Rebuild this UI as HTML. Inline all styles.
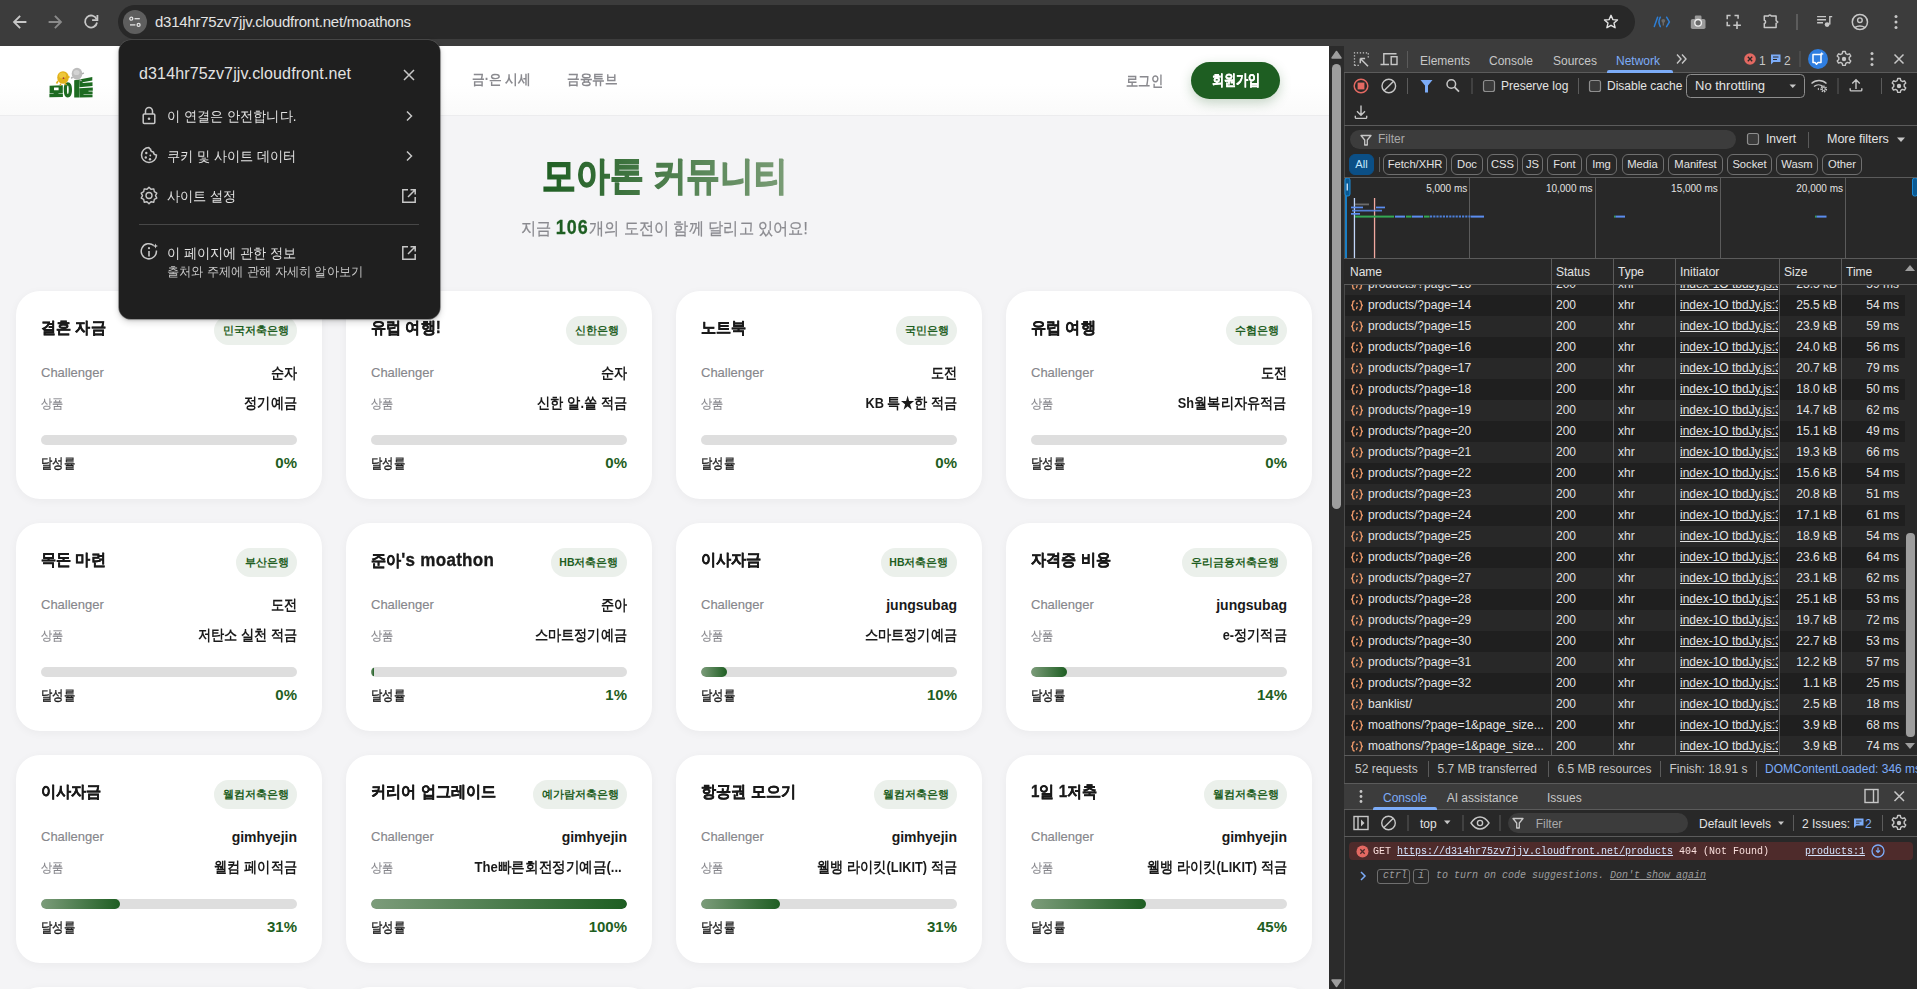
<!DOCTYPE html>
<html><head><meta charset="utf-8">
<style>
*{box-sizing:border-box;margin:0;padding:0}
html,body{width:1917px;height:989px;overflow:hidden;background:#282828;font-family:"Liberation Sans",sans-serif}
.abs{position:absolute}
#chrome{position:absolute;left:0;top:0;width:1917px;height:46px;background:#3c3c3c}
#omni{position:absolute;left:118px;top:5px;width:1517px;height:34px;border-radius:17px;background:#282828}
#page{position:absolute;left:0;top:46px;width:1329px;height:943px;background:#f4f4f6;overflow:hidden}
#hdr{position:absolute;left:0;top:0;width:1329px;height:70px;background:linear-gradient(#fff 55%,#fafafa);border-bottom:1px solid #ececee}
.card{position:absolute;width:305.5px;height:208px;background:#fff;border-radius:24px;box-shadow:0 2px 10px rgba(0,0,0,.045)}
#sb{position:absolute;left:1329px;top:46px;width:15px;height:943px;background:#2b2b2b}
#dt{position:absolute;left:1344px;top:46px;width:573px;height:943px;background:#282828;box-shadow:inset 1px 0 0 #4a4a4a;color:#e3e3e3;font-size:12px}
#popup{position:absolute;left:119px;top:40px;width:321px;height:279px;background:#1f1f1f;border-radius:12px;box-shadow:0 0 0 .6px rgba(90,90,90,.9),0 1px 3px rgba(0,0,0,.25),0 3px 6px 1px rgba(0,0,0,.12);color:#e3e3e3}

.card .ct{position:absolute;left:24.75px;top:24px;font-size:16px;font-weight:700;color:#1a1a1a;line-height:26px;white-space:nowrap;transform:scaleX(.945);transform-origin:0 50%;-webkit-text-stroke:.35px #1a1a1a}
.card .bd{position:absolute;right:24.75px;top:25px;height:29px;padding:0 8.5px;border-radius:15px;background:#ebf0eb;white-space:nowrap}
.card .bd span{display:inline-block;color:#1e5e22;font-size:10.5px;font-weight:700;line-height:29px}
.card .lb{position:absolute;left:24.75px;font-size:13px;color:#86868b;line-height:20px;white-space:nowrap;-webkit-text-stroke:.15px #86868b}
.card .vl{position:absolute;right:24.75px;font-size:14.5px;font-weight:700;color:#1a1a1a;line-height:20px;white-space:nowrap;transform:scaleX(.88);transform-origin:100% 50%}
.card .l1{top:72px}.card .l2{top:102px}.card .la{transform:none;font-size:14px}.card .ko{top:103px;transform:scaleX(.86);transform-origin:0 50%}
.card .bar{position:absolute;left:24.75px;top:143.5px;width:256px;height:10px;border-radius:5px;background:#dedede;overflow:hidden}
.card .fill{height:100%;border-radius:5px;background:linear-gradient(90deg,#7c9c7a,#1e5e22)}
.card .dl{position:absolute;left:24.75px;top:162px;font-size:14px;font-weight:400;-webkit-text-stroke:.35px #1a1a1a;color:#1a1a1a;line-height:20px;transform:scaleX(.81);transform-origin:0 50%}
.card .pc{position:absolute;right:24.75px;top:162px;font-size:15px;font-weight:700;color:#1e5e22;line-height:20px}
#logo{position:absolute;left:44px;top:16px}
.nav{position:absolute;top:22px;font-size:15px;font-weight:600;color:#8a8a8f;line-height:24px;white-space:nowrap;transform-origin:0 50%}
#signup{position:absolute;left:1191px;top:16px;width:89px;height:37px;border-radius:19px;background:#1e5e22;color:#fff;font-size:15px;font-weight:700;text-align:center;line-height:35px;box-shadow:0 4px 12px rgba(30,94,34,.25)}
#title{position:absolute;left:0;width:1329px;top:105px;text-align:center;font-size:39px;font-weight:800;line-height:50px}
#title span{display:inline-block;transform:scaleX(0.865);background:linear-gradient(90deg,#1e5e22,#7b9d77);-webkit-background-clip:text;background-clip:text;color:transparent;-webkit-text-stroke:1.3px transparent;padding:0 2px}
#sub{position:absolute;left:0;width:1329px;top:168px;text-align:center;font-size:17px;color:#8a8a8f;line-height:26px;transform:scaleX(0.895);-webkit-text-stroke:.25px #8a8a8f}
#sub b{color:#1e5e22;font-size:20px;font-weight:800;letter-spacing:1.2px;-webkit-text-stroke:.3px #1e5e22}
.pi{position:absolute;left:48px;font-size:14px;line-height:20px;color:#e3e3e3;white-space:nowrap;transform:scaleX(.94);transform-origin:0 50%}

.dtt{position:absolute;font-size:12px;line-height:26px;white-space:nowrap}
.chip{position:absolute;top:108px;height:20.5px;border:1px solid #6f6f6f;border-radius:6px;font-size:11.2px;line-height:18.5px;text-align:center;color:#e3e3e3;white-space:nowrap}
.ovl{position:absolute;width:78px;text-align:right;font-size:10px;line-height:12px;color:#e3e3e3}
.row{position:absolute;left:0;width:560px;height:21px;font-size:12px;line-height:21px;color:#e3e3e3;white-space:nowrap}
.row span{position:absolute;top:0}
.row .ic{position:absolute;left:5px;top:5px}
.row .nm{left:23px}
.row .st{left:211px}.row .ty{left:273px}
.row .in{left:335px;width:98px;overflow:hidden;text-decoration:underline}
.row .sz{left:436px;width:56px;text-align:right}
.row .tm{left:498px;width:56px;text-align:right}
.mono{position:absolute;font-family:"Liberation Mono",monospace;font-size:10px;white-space:nowrap}
</style></head><body><svg width="0" height="0" style="position:absolute"><defs><g id="brc" fill="none" stroke="#f29c6b" stroke-width="1.3" stroke-linecap="round"><path d="M4.3 .8C3 .8 2.8 1.6 2.8 3.2C2.8 4.6 2.4 5.2 1.2 5.3C2.4 5.4 2.8 6 2.8 7.4C2.8 9 3 9.9 4.3 9.9"/><path d="M9.7 .8C11 .8 11.2 1.6 11.2 3.2C11.2 4.6 11.6 5.2 12.8 5.3C11.6 5.4 11.2 6 11.2 7.4C11.2 9 11 9.9 9.7 9.9"/><path d="M7.1 6.6L6.5 8.6"/><circle cx="7" cy="3.3" r=".9" fill="#f29c6b" stroke="none"/></g></defs></svg>
<div id="chrome">
  <svg class="abs" style="left:0;top:0" width="118" height="46" viewBox="0 0 118 46">
    <g fill="none" stroke="#c7c7c7" stroke-width="1.8" stroke-linecap="square">
      <path d="M25.5 22H14.5M19.5 16.5L14 22L19.5 27.5"/>
    </g>
    <g fill="none" stroke="#8a8a8a" stroke-width="1.8" stroke-linecap="square">
      <path d="M49.5 22H60.5M55.5 16.5L61 22L55.5 27.5"/>
    </g>
    <g fill="none" stroke="#c7c7c7" stroke-width="1.8">
      <path d="M96.6 19.2A6 6 0 1 0 97 22.5"/>
      <path d="M97.4 15.8V20.2H93" stroke-linecap="square"/>
    </g>
  </svg>
  <div id="omni">
    <div class="abs" style="left:5px;top:5px;width:24px;height:24px;border-radius:12px;background:#5e5e5e"></div>
    <svg class="abs" style="left:5px;top:5px" width="24" height="24" viewBox="0 0 24 24"><g fill="none" stroke="#e3e3e3" stroke-width="1.3"><circle cx="8.3" cy="8.7" r="1.5"/><path d="M11.5 8.7H16.8"/><circle cx="15.6" cy="14.9" r="1.5"/><path d="M7 14.9H12.4"/></g></svg>
    <div class="abs" style="left:37px;top:0;line-height:34px;font-size:15px;color:#e3e3e3;letter-spacing:-0.24px">d314hr75zv7jjv.cloudfront.net/moathons</div>
    <svg class="abs" style="left:1485px;top:9px" width="16" height="16" viewBox="0 0 16 16"><path d="M8 1.3L9.9 5.6L14.5 6L11 9.1L12.1 13.7L8 11.3L3.9 13.7L5 9.1L1.5 6L6.1 5.6Z" fill="none" stroke="#e3e3e3" stroke-width="1.4" stroke-linejoin="round"/></svg>
  </div>
  <svg class="abs" style="left:1640px;top:0" width="277" height="46" viewBox="0 0 277 46">
    <g fill="none" stroke="#2e7fd6" stroke-width="1.5" stroke-linecap="round"><path d="M14.3 26.5L17.6 17.3"/><path d="M20.3 17.2Q17.6 21.9 20.3 26.6"/><path d="M26.6 17.2L29.4 21.9L26.6 26.6"/></g>
    <circle cx="23.3" cy="20.8" r="1.9" fill="#6a6a6a"/><path d="M23.3 22v3.6" stroke="#6a6a6a" stroke-width="1.4"/>
    <rect x="50.8" y="19" width="14.7" height="10" rx="1.8" fill="#9a9a9a"/><rect x="54.8" y="15.6" width="6.7" height="4.5" rx="1.2" fill="#9a9a9a"/>
    <circle cx="58.1" cy="22.8" r="3.3" fill="#6a6a6a" stroke="#ededed" stroke-width="1.4"/>
    <g fill="none" stroke="#c7c7c7" stroke-width="1.5"><path d="M87.2 19.2V15.6H90.6M94.5 15.6H98.1V18.7M87.2 21.8V25.4H90.2"/><path d="M97 21.6V28.9M93.3 25.2H100.9" stroke-width="1.6"/></g>
    <path d="M124.3 16.1H128.4a1.5 1.5 0 0 1 2.9 0H136.1V20.6l1.7 1.4l-1.7 1.4V27.6H124.3V23.6a1.7 1.7 0 0 0 0-3.3z" fill="none" stroke="#c7c7c7" stroke-width="1.5" stroke-linejoin="round"/>
    <rect x="156.3" y="14" width="1.4" height="16" fill="#6a6a6a"/>
    <g fill="none" stroke="#c7c7c7" stroke-width="1.4"><path d="M177.1 16.6H186M177.1 19.8H186M177.1 22.8H183"/><path d="M189.8 24.5V16.6H192.2"/></g><circle cx="187.1" cy="24.6" r="2.4" fill="#c7c7c7"/>
    <circle cx="219.9" cy="22" r="7.6" fill="none" stroke="#c7c7c7" stroke-width="1.5"/><circle cx="219.9" cy="20.2" r="2.3" fill="none" stroke="#c7c7c7" stroke-width="1.4"/><path d="M214.6 27.6q5.3-3.2 10.6 0" fill="none" stroke="#c7c7c7" stroke-width="1.5"/>
    <g fill="#c7c7c7"><circle cx="256" cy="16.5" r="1.5"/><circle cx="256" cy="22" r="1.5"/><circle cx="256" cy="27.5" r="1.5"/></g>
  </svg>
</div>
<div id="page">
  <div id="hdr">
    <svg id="logo" width="54" height="40" viewBox="0 0 54 40">
  <g fill="#1d6b21">
    <path d="M5.6 23.8L18.8 23.2V31H14.5V31.6H18.9V35L5.4 35.3V31.8H9.6V31.2H5.6ZM10 25.6V28.3H14.6V25.5Z" fill-rule="evenodd"/>
    <path d="M23.8 20.2C26.5 20.2 28 23 28 27.7C28 32.5 26.5 35.4 23.8 35.4C21 35.4 19.8 32.5 19.8 27.7C19.8 23 21 20.2 23.8 20.2ZM23.8 23.5C23.2 23.5 23 25 23 27.8C23 30.6 23.2 32.1 23.8 32.1C24.4 32.1 24.7 30.6 24.7 27.8C24.7 25 24.4 23.5 23.8 23.5Z" fill-rule="evenodd"/>
    <path d="M30.2 18.2L35.2 17.6V35.6L30.2 35.4Z"/>
    <path d="M35.2 17.4L48.3 15V18.6L38.6 20.3V21L48.5 20.2V24L35.4 25.2ZM35.2 26.3L48.8 25.5V28.8H44.5V29.6H48.6V31.9H39.5V32.5H48.5V35.3L35.4 35.6V32.4Z"/>
  </g>
  <ellipse cx="19" cy="15.5" rx="5.8" ry="6.3" fill="#e2b21c"/>
  <ellipse cx="18.5" cy="13.5" rx="3.5" ry="3" fill="#f3d24a" opacity=".7"/>
  <path d="M14 19l-1.5 2.5M24 15.5l1.5 -1" stroke="#e2b21c" stroke-width="1.6"/>
  <path d="M16 22l1 1.5M21 21.5l1.5 1.5" stroke="#d9a51a" stroke-width="1.4"/>
  <circle cx="19.5" cy="16.2" r="0.9" fill="#a33"/>
  <ellipse cx="33" cy="11.8" rx="5.3" ry="6" fill="#bdbdbd"/>
  <ellipse cx="32.5" cy="10.5" rx="3" ry="2.6" fill="#d8d8d8" opacity=".8"/>
  <path d="M38 12l1.8-1.2M28.5 15l-1.2 1.5M36 17.5l1.5 1.5" stroke="#aaa" stroke-width="1.5"/>
</svg>
    <div class="nav" style="left:472px;font-size:14px;top:20.5px;transform:scaleX(.91)">금·은 시세</div>
    <div class="nav" style="left:567px;font-size:14px;top:20.5px;transform:scaleX(.9)">금융튜브</div>
    <div class="nav" style="left:1126px;top:23px;font-weight:700;transform:scaleX(.82)">로그인</div>
    <div id="signup"><span style="display:inline-block;transform:scaleX(.81);-webkit-text-stroke:.3px #fff">회원가입</span></div>
  </div>
  <div id="title"><span>모아톤 커뮤니티</span></div>
  <div id="sub">지금 <b>106</b>개의 도전이 함께 달리고 있어요!</div>
<div class="card" style="left:16.25px;top:245.2px">
<div class="ct">결혼 자금</div><div class="bd"><span>민국저축은행</span></div>
<div class="lb l1">Challenger</div><div class="vl l1">순자</div>
<div class="lb l2 ko">상품</div><div class="vl l2">정기예금</div>
<div class="bar"></div>
<div class="dl">달성률</div><div class="pc">0%</div>
</div>
<div class="card" style="left:346.25px;top:245.2px">
<div class="ct">유럽 여행!</div><div class="bd"><span>신한은행</span></div>
<div class="lb l1">Challenger</div><div class="vl l1">순자</div>
<div class="lb l2 ko">상품</div><div class="vl l2">신한 알.쏠 적금</div>
<div class="bar"></div>
<div class="dl">달성률</div><div class="pc">0%</div>
</div>
<div class="card" style="left:676.25px;top:245.2px">
<div class="ct">노트북</div><div class="bd"><span>국민은행</span></div>
<div class="lb l1">Challenger</div><div class="vl l1">도전</div>
<div class="lb l2 ko">상품</div><div class="vl l2">KB 특★한 적금</div>
<div class="bar"></div>
<div class="dl">달성률</div><div class="pc">0%</div>
</div>
<div class="card" style="left:1006.25px;top:245.2px">
<div class="ct">유럽 여행</div><div class="bd"><span>수협은행</span></div>
<div class="lb l1">Challenger</div><div class="vl l1">도전</div>
<div class="lb l2 ko">상품</div><div class="vl l2">Sh월복리자유적금</div>
<div class="bar"></div>
<div class="dl">달성률</div><div class="pc">0%</div>
</div>
<div class="card" style="left:16.25px;top:477.2px">
<div class="ct">목돈 마련</div><div class="bd"><span>부산은행</span></div>
<div class="lb l1">Challenger</div><div class="vl l1">도전</div>
<div class="lb l2 ko">상품</div><div class="vl l2">저탄소 실천 적금</div>
<div class="bar"></div>
<div class="dl">달성률</div><div class="pc">0%</div>
</div>
<div class="card" style="left:346.25px;top:477.2px">
<div class="ct">준아<span style="font-size:18px;letter-spacing:.3px">'s moathon</span></div><div class="bd"><span>HB저축은행</span></div>
<div class="lb l1">Challenger</div><div class="vl l1">준아</div>
<div class="lb l2 ko">상품</div><div class="vl l2">스마트정기예금</div>
<div class="bar"><div class="fill" style="width:1%"></div></div>
<div class="dl">달성률</div><div class="pc">1%</div>
</div>
<div class="card" style="left:676.25px;top:477.2px">
<div class="ct">이사자금</div><div class="bd"><span>HB저축은행</span></div>
<div class="lb l1">Challenger</div><div class="vl l1 la">jungsubag</div>
<div class="lb l2 ko">상품</div><div class="vl l2">스마트정기예금</div>
<div class="bar"><div class="fill" style="width:10%"></div></div>
<div class="dl">달성률</div><div class="pc">10%</div>
</div>
<div class="card" style="left:1006.25px;top:477.2px">
<div class="ct">자격증 비용</div><div class="bd"><span>우리금융저축은행</span></div>
<div class="lb l1">Challenger</div><div class="vl l1 la">jungsubag</div>
<div class="lb l2 ko">상품</div><div class="vl l2">e-정기적금</div>
<div class="bar"><div class="fill" style="width:14%"></div></div>
<div class="dl">달성률</div><div class="pc">14%</div>
</div>
<div class="card" style="left:16.25px;top:709.2px">
<div class="ct">이사자금</div><div class="bd"><span>웰컴저축은행</span></div>
<div class="lb l1">Challenger</div><div class="vl l1 la">gimhyejin</div>
<div class="lb l2 ko">상품</div><div class="vl l2">웰컴 페이적금</div>
<div class="bar"><div class="fill" style="width:31%"></div></div>
<div class="dl">달성률</div><div class="pc">31%</div>
</div>
<div class="card" style="left:346.25px;top:709.2px">
<div class="ct">커리어 업그레이드</div><div class="bd"><span>예가람저축은행</span></div>
<div class="lb l1">Challenger</div><div class="vl l1 la">gimhyejin</div>
<div class="lb l2 ko">상품</div><div class="vl l2" style="right:30.5px;transform:scaleX(.905)">The빠른회전정기예금(...</div>
<div class="bar"><div class="fill" style="width:100%"></div></div>
<div class="dl">달성률</div><div class="pc">100%</div>
</div>
<div class="card" style="left:676.25px;top:709.2px">
<div class="ct">항공권 모으기</div><div class="bd"><span>웰컴저축은행</span></div>
<div class="lb l1">Challenger</div><div class="vl l1 la">gimhyejin</div>
<div class="lb l2 ko">상품</div><div class="vl l2">웰뱅 라이킷(LIKIT) 적금</div>
<div class="bar"><div class="fill" style="width:31%"></div></div>
<div class="dl">달성률</div><div class="pc">31%</div>
</div>
<div class="card" style="left:1006.25px;top:709.2px">
<div class="ct">1일 1저축</div><div class="bd"><span>웰컴저축은행</span></div>
<div class="lb l1">Challenger</div><div class="vl l1 la">gimhyejin</div>
<div class="lb l2 ko">상품</div><div class="vl l2">웰뱅 라이킷(LIKIT) 적금</div>
<div class="bar"><div class="fill" style="width:45%"></div></div>
<div class="dl">달성률</div><div class="pc">45%</div>
</div>
<div class="card" style="left:16.25px;top:941.2px"></div>
<div class="card" style="left:346.25px;top:941.2px"></div>
<div class="card" style="left:676.25px;top:941.2px"></div>
<div class="card" style="left:1006.25px;top:941.2px"></div>
</div>
<div id="sb">
  <svg class="abs" style="left:0;top:0" width="15" height="943"><path d="M3 12h9L7.5 5.5z" fill="#9e9e9e" stroke="#9e9e9e" stroke-width="1.5" stroke-linejoin="round"/><path d="M3 934h9L7.5 940.5z" fill="#9e9e9e" stroke="#9e9e9e" stroke-width="1.5" stroke-linejoin="round"/></svg>
  <div class="abs" style="left:3px;top:18px;width:9px;height:445px;border-radius:4.5px;background:#9e9e9e"></div>
</div>
<div id="dt"><div class="abs" style="left:0;top:0;width:573px;height:27px;background:#3c3c3c;border-bottom:1px solid #5b5b5b"></div>
<div class="abs" style="left:0;top:79px;width:573px;height:1px;background:#5b5b5b"></div>
<svg class="abs" style="left:0;top:0" width="573" height="27" viewBox="0 0 573 27">
 <g fill="none" stroke="#c7c7c7" stroke-width="1.3" stroke-dasharray="1.3 1.7"><path d="M10.5 19.5V6.8H24.3V12"/><path d="M10.5 19.3H15"/></g>
 <g fill="none" stroke="#c7c7c7" stroke-width="1.5"><path d="M16.3 12.5L24 20.2M16.3 12.5V17.3M16.3 12.5H21.1"/></g>
 <g fill="none" stroke="#c7c7c7" stroke-width="1.4"><path d="M39.8 18V7.7H52.5M36.5 18.5H45"/><rect x="47.2" y="10.7" width="5.8" height="7.8"/></g>
 <rect x="63" y="5" width="1" height="17" fill="#5b5b5b"/>
 <g fill="none" stroke="#c7c7c7" stroke-width="1.4"><path d="M333 8.5L337 13L333 17.5M338 8.5L342 13L338 17.5"/></g>
 <circle cx="406" cy="13" r="5.8" fill="#e46962"/><path d="M403.8 10.8l4.4 4.4M408.2 10.8l-4.4 4.4" stroke="#282828" stroke-width="1.3"/>
 <path d="M427 8.5h9.5v7.5h-7l-2.5 2.5z" fill="#7cacf8"/><path d="M429 11h5.5M429 13.5h4" stroke="#282828" stroke-width="1"/>
 <rect x="455.5" y="5" width="1" height="16" fill="#5b5b5b"/>
 <circle cx="474" cy="13" r="10" fill="#2f7ee0"/>
 <path d="M469 8.5h8v8h-3l-1.5 1.8l-1.5-1.8h-2z" fill="none" stroke="#fff" stroke-width="1.5" stroke-linejoin="round"/><path d="M477.8 5.8l.6 1.5l1.5.6l-1.5.6l-.6 1.5l-.6-1.5l-1.5-.6l1.5-.6z" fill="#fff"/>
 <g transform="translate(500 13)"><path d="M-1.3-7.5h2.6l.5 2.1l1.6.9l2.1-.7l1.3 2.2l-1.6 1.5v1.9l1.6 1.5l-1.3 2.2l-2.1-.7l-1.6.9l-.5 2.1h-2.6l-.5-2.1l-1.6-.9l-2.1.7l-1.3-2.2l1.6-1.5v-1.9l-1.6-1.5l1.3-2.2l2.1.7l1.6-.9z" fill="none" stroke="#c7c7c7" stroke-width="1.4" stroke-linejoin="round"/><circle r="2.2" fill="#c7c7c7"/></g>
 <g fill="#c7c7c7"><circle cx="528" cy="7.5" r="1.5"/><circle cx="528" cy="13" r="1.5"/><circle cx="528" cy="18.5" r="1.5"/></g>
 <path d="M550.5 8.5l9 9M559.5 8.5L550.5 17.5" stroke="#c7c7c7" stroke-width="1.5"/>
</svg>
<div class="dtt" style="left:76px;top:1.5px;color:#c7c7c7">Elements</div>
<div class="dtt" style="left:145px;top:1.5px;color:#c7c7c7">Console</div>
<div class="dtt" style="left:209px;top:1.5px;color:#c7c7c7">Sources</div>
<div class="dtt" style="left:272px;top:1.5px;color:#7cacf8">Network</div>
<div class="abs" style="left:263px;top:23.5px;width:66px;height:3px;border-radius:2px 2px 0 0;background:#7cacf8"></div>
<div class="dtt" style="left:415px;top:1.5px;color:#c7c7c7">1</div><div class="dtt" style="left:440px;top:1.5px;color:#c7c7c7">2</div>
<svg class="abs" style="left:0;top:27px" width="573" height="52" viewBox="0 0 573 52">
 <circle cx="17" cy="13" r="6.8" fill="none" stroke="#e46962" stroke-width="1.5"/><rect x="13.6" y="9.6" width="6.8" height="6.8" fill="#e46962"/>
 <circle cx="44.8" cy="13" r="6.8" fill="none" stroke="#c7c7c7" stroke-width="1.4"/><path d="M40 17.8L49.6 8.2" stroke="#c7c7c7" stroke-width="1.4"/>
 <rect x="63" y="5" width="1" height="16" fill="#5b5b5b"/>
 <path d="M76.5 7h12l-4.5 5.5v7h-3v-7z" fill="#7cacf8"/>
 <circle cx="107.3" cy="11" r="4.3" fill="none" stroke="#c7c7c7" stroke-width="1.5"/><path d="M110.5 14.2L115 18.7" stroke="#c7c7c7" stroke-width="1.7"/>
 <rect x="127.5" y="5" width="1" height="16" fill="#5b5b5b"/>
 <rect x="139.5" y="7.5" width="11" height="11" rx="2" fill="#3a3a3a" stroke="#8e8e8e" stroke-width="1.2"/>
 <rect x="234" y="5" width="1" height="16" fill="#5b5b5b"/>
 <rect x="245.5" y="7.5" width="11" height="11" rx="2" fill="#3a3a3a" stroke="#8e8e8e" stroke-width="1.2"/>
 <rect x="342.5" y="1.5" width="118" height="23" rx="4" fill="none" stroke="#8e8e8e" stroke-width="1"/>
 <path d="M445.5 11.5h6.5l-3.25 3.5z" fill="#c7c7c7"/>
 <g fill="none" stroke="#c7c7c7" stroke-width="1.4"><path d="M467.5 10.5a11 11 0 0 1 15 0M470 13.5a7 7 0 0 1 9 0"/></g><g transform="translate(479.7 16)"><circle r="2.6" fill="none" stroke="#c7c7c7" stroke-width="1.6" stroke-dasharray="1.4 .9"/><circle r="1.6" fill="none" stroke="#c7c7c7" stroke-width="1"/></g><path d="M475 14.8l-1.6 1.2l1.6 1.2z" fill="#c7c7c7"/>
 <rect x="493.5" y="5" width="1" height="16" fill="#5b5b5b"/>
 <path d="M512 16V6.8M508.2 10.6L512 6.8l3.8 3.8M506.2 15.3v1.6a1 1 0 0 0 1 1h9.6a1 1 0 0 0 1-1v-1.6" fill="none" stroke="#c7c7c7" stroke-width="1.4"/>
 <rect x="537" y="5" width="1" height="16" fill="#5b5b5b"/>
 <g transform="translate(555 13)"><path d="M-1.3-7.5h2.6l.5 2.1l1.6.9l2.1-.7l1.3 2.2l-1.6 1.5v1.9l1.6 1.5l-1.3 2.2l-2.1-.7l-1.6.9l-.5 2.1h-2.6l-.5-2.1l-1.6-.9l-2.1.7l-1.3-2.2l1.6-1.5v-1.9l-1.6-1.5l1.3-2.2l2.1.7l1.6-.9z" fill="none" stroke="#c7c7c7" stroke-width="1.4" stroke-linejoin="round"/><circle r="2.2" fill="#c7c7c7"/></g>
 <path d="M17 32.5V42M13 38.3L17 42.3l4-4M11.3 42.8v1.6a1 1 0 0 0 1 1h9.4a1 1 0 0 0 1-1v-1.6" fill="none" stroke="#c7c7c7" stroke-width="1.4"/>
</svg>
<div class="dtt" style="left:157px;top:27px;line-height:26px;color:#e3e3e3">Preserve log</div>
<div class="dtt" style="left:263px;top:27px;line-height:26px;color:#e3e3e3">Disable cache</div>
<div class="dtt" style="left:351px;top:27px;line-height:26px;color:#e3e3e3;font-size:13px">No throttling</div>
<div class="abs" style="left:6px;top:83.5px;width:386px;height:19.5px;border-radius:10px;background:#3c3c3c"></div>
<svg class="abs" style="left:14px;top:86px" width="16" height="16" viewBox="0 0 16 16"><path d="M3 3.5h10L9.3 8v5H6.7V8z" fill="none" stroke="#c7c7c7" stroke-width="1.3" stroke-linejoin="round"/></svg>
<div class="dtt" style="left:34px;top:80px;line-height:26px;color:#aaaaaa">Filter</div>
<svg class="abs" style="left:402px;top:86px" width="16" height="16"><rect x="1.5" y="1.5" width="11" height="11" rx="2" fill="#3a3a3a" stroke="#8e8e8e" stroke-width="1.2"/></svg>
<div class="dtt" style="left:422px;top:80px;line-height:26px;color:#e3e3e3">Invert</div>
<div class="abs" style="left:464px;top:86px;width:1px;height:16px;background:#5b5b5b"></div>
<div class="dtt" style="left:483px;top:80px;line-height:26px;color:#e3e3e3;font-size:12.5px">More filters</div>
<svg class="abs" style="left:552px;top:90px" width="10" height="8"><path d="M1 1.5h8l-4 4.5z" fill="#c7c7c7"/></svg>
<div class="chip" style="left:5.2000000000000455px;width:24.6px;background:#0b4f86;border-color:#0b4f86;color:#c2e7ff">All</div>
<div class="abs" style="left:34.5px;top:111px;width:1px;height:15px;background:#5b5b5b"></div>
<div class="chip" style="left:39px;width:64px">Fetch/XHR</div>
<div class="chip" style="left:107px;width:32px">Doc</div>
<div class="chip" style="left:143px;width:31px">CSS</div>
<div class="chip" style="left:178px;width:21px">JS</div>
<div class="chip" style="left:203px;width:35px">Font</div>
<div class="chip" style="left:242px;width:31px">Img</div>
<div class="chip" style="left:277.5px;width:42.0px">Media</div>
<div class="chip" style="left:324px;width:55px">Manifest</div>
<div class="chip" style="left:383px;width:45px">Socket</div>
<div class="chip" style="left:432px;width:42px">Wasm</div>
<div class="chip" style="left:478px;width:40px">Other</div>
<div class="abs" style="left:0;top:131px;width:573px;height:1px;background:#5b5b5b"></div>
<div class="abs" style="left:125.29999999999995px;top:132px;width:1px;height:80px;background:#5b5b5b"></div>
<div class="ovl" style="left:45.299999999999955px;top:137px">5,000 ms</div>
<div class="abs" style="left:250.5999999999999px;top:132px;width:1px;height:80px;background:#5b5b5b"></div>
<div class="ovl" style="left:170.5999999999999px;top:137px">10,000 ms</div>
<div class="abs" style="left:375.79999999999995px;top:132px;width:1px;height:80px;background:#5b5b5b"></div>
<div class="ovl" style="left:295.79999999999995px;top:137px">15,000 ms</div>
<div class="abs" style="left:501px;top:132px;width:1px;height:80px;background:#5b5b5b"></div>
<div class="ovl" style="left:421px;top:137px">20,000 ms</div>
<svg class="abs" style="left:0;top:132px" width="573" height="80" viewBox="0 0 573 80">
 <rect x="1" y="0" width="2" height="80" fill="#1a7fc4"/>
 <rect x="1" y="0" width="5" height="18" rx="2" fill="#0b5a94" stroke="#1a8ad6" stroke-width="1"/><rect x="2.6" y="5.5" width="1.3" height="7" fill="#d6ebff"/>
 <rect x="568.5" y="0" width="5" height="18" rx="2" fill="#0b5a94" stroke="#1a8ad6" stroke-width="1"/>
 <rect x="9.8" y="20" width="1.3" height="60" fill="#c2d7fa"/>
 <rect x="29.9" y="20" width="1.3" height="60" fill="#f2a9a0"/>
 <rect x="11" y="25.5" width="14" height="1.8" fill="#6b6b6b"/>
 <g fill="#5b8def"><rect x="7" y="28.6" width="12" height="1.7"/><rect x="32" y="28.6" width="9" height="1.7"/><rect x="8" y="31.8" width="30" height="1.7" opacity=".85"/><rect x="7" y="35" width="9" height="1.7"/></g>
 <rect x="11" y="37.6" width="39" height="2" fill="#34a853"/>
 <rect x="51" y="37.6" width="10" height="2" fill="#5b8def"/><rect x="62" y="37.6" width="5.5" height="2" fill="#34a853"/><rect x="68" y="37.6" width="11" height="2" fill="#5b8def"/><rect x="80" y="37.6" width="5.5" height="2" fill="#34a853"/>
 <path d="M86 38.6H127" stroke="#4c7fd8" stroke-width="2" stroke-dasharray="2.2 1"/><rect x="127" y="37.6" width="13" height="2" fill="#5b8def"/>
 <rect x="270" y="37.6" width="1.5" height="2" fill="#34a853"/><rect x="271.5" y="37.6" width="9.5" height="2" fill="#5b8def"/>
 <rect x="471" y="37.6" width="1.5" height="2" fill="#34a853"/><rect x="472.5" y="37.6" width="10" height="2" fill="#5b8def"/>
</svg>
<div class="abs" style="left:0;top:212px;width:573px;height:27px;background:#282828;border-top:1px solid #5b5b5b;border-bottom:1px solid #5b5b5b"></div>
<div class="abs" style="left:207px;top:213px;width:1px;height:497px;background:#5b5b5b"></div>
<div class="abs" style="left:269px;top:213px;width:1px;height:497px;background:#5b5b5b"></div>
<div class="abs" style="left:331px;top:213px;width:1px;height:497px;background:#5b5b5b"></div>
<div class="abs" style="left:435px;top:213px;width:1px;height:497px;background:#5b5b5b"></div>
<div class="abs" style="left:497px;top:213px;width:1px;height:497px;background:#5b5b5b"></div>
<div class="dtt" style="left:6px;top:213px;line-height:26px;color:#e3e3e3">Name</div>
<div class="dtt" style="left:212px;top:213px;line-height:26px;color:#e3e3e3">Status</div>
<div class="dtt" style="left:274px;top:213px;line-height:26px;color:#e3e3e3">Type</div>
<div class="dtt" style="left:336px;top:213px;line-height:26px;color:#e3e3e3">Initiator</div>
<div class="dtt" style="left:440px;top:213px;line-height:26px;color:#e3e3e3">Size</div>
<div class="dtt" style="left:502px;top:213px;line-height:26px;color:#e3e3e3">Time</div>
<svg class="abs" style="left:560px;top:217px" width="12" height="10"><path d="M1 8h10L6 2z" fill="#9e9e9e"/></svg>
<div class="abs" style="left:1px;top:239px;width:560px;height:470px;overflow:hidden"><div class="row" style="top:-11.5px;background:#282828"><svg class="ic" width="14" height="12" viewBox="0 0 14 12"><use href="#brc"/></svg><span class="nm">products/?page=13</span><span class="st">200</span><span class="ty">xhr</span><span class="in">index-1O tbdJy.js:3</span><span class="sz">23.5 kB</span><span class="tm">59 ms</span></div><div class="row" style="top:9.5px;background:#1f1f1f"><svg class="ic" width="14" height="12" viewBox="0 0 14 12"><use href="#brc"/></svg><span class="nm">products/?page=14</span><span class="st">200</span><span class="ty">xhr</span><span class="in">index-1O tbdJy.js:3</span><span class="sz">25.5 kB</span><span class="tm">54 ms</span></div><div class="row" style="top:30.5px;background:#282828"><svg class="ic" width="14" height="12" viewBox="0 0 14 12"><use href="#brc"/></svg><span class="nm">products/?page=15</span><span class="st">200</span><span class="ty">xhr</span><span class="in">index-1O tbdJy.js:3</span><span class="sz">23.9 kB</span><span class="tm">59 ms</span></div><div class="row" style="top:51.5px;background:#1f1f1f"><svg class="ic" width="14" height="12" viewBox="0 0 14 12"><use href="#brc"/></svg><span class="nm">products/?page=16</span><span class="st">200</span><span class="ty">xhr</span><span class="in">index-1O tbdJy.js:3</span><span class="sz">24.0 kB</span><span class="tm">56 ms</span></div><div class="row" style="top:72.5px;background:#282828"><svg class="ic" width="14" height="12" viewBox="0 0 14 12"><use href="#brc"/></svg><span class="nm">products/?page=17</span><span class="st">200</span><span class="ty">xhr</span><span class="in">index-1O tbdJy.js:3</span><span class="sz">20.7 kB</span><span class="tm">79 ms</span></div><div class="row" style="top:93.5px;background:#1f1f1f"><svg class="ic" width="14" height="12" viewBox="0 0 14 12"><use href="#brc"/></svg><span class="nm">products/?page=18</span><span class="st">200</span><span class="ty">xhr</span><span class="in">index-1O tbdJy.js:3</span><span class="sz">18.0 kB</span><span class="tm">50 ms</span></div><div class="row" style="top:114.5px;background:#282828"><svg class="ic" width="14" height="12" viewBox="0 0 14 12"><use href="#brc"/></svg><span class="nm">products/?page=19</span><span class="st">200</span><span class="ty">xhr</span><span class="in">index-1O tbdJy.js:3</span><span class="sz">14.7 kB</span><span class="tm">62 ms</span></div><div class="row" style="top:135.5px;background:#1f1f1f"><svg class="ic" width="14" height="12" viewBox="0 0 14 12"><use href="#brc"/></svg><span class="nm">products/?page=20</span><span class="st">200</span><span class="ty">xhr</span><span class="in">index-1O tbdJy.js:3</span><span class="sz">15.1 kB</span><span class="tm">49 ms</span></div><div class="row" style="top:156.5px;background:#282828"><svg class="ic" width="14" height="12" viewBox="0 0 14 12"><use href="#brc"/></svg><span class="nm">products/?page=21</span><span class="st">200</span><span class="ty">xhr</span><span class="in">index-1O tbdJy.js:3</span><span class="sz">19.3 kB</span><span class="tm">66 ms</span></div><div class="row" style="top:177.5px;background:#1f1f1f"><svg class="ic" width="14" height="12" viewBox="0 0 14 12"><use href="#brc"/></svg><span class="nm">products/?page=22</span><span class="st">200</span><span class="ty">xhr</span><span class="in">index-1O tbdJy.js:3</span><span class="sz">15.6 kB</span><span class="tm">54 ms</span></div><div class="row" style="top:198.5px;background:#282828"><svg class="ic" width="14" height="12" viewBox="0 0 14 12"><use href="#brc"/></svg><span class="nm">products/?page=23</span><span class="st">200</span><span class="ty">xhr</span><span class="in">index-1O tbdJy.js:3</span><span class="sz">20.8 kB</span><span class="tm">51 ms</span></div><div class="row" style="top:219.5px;background:#1f1f1f"><svg class="ic" width="14" height="12" viewBox="0 0 14 12"><use href="#brc"/></svg><span class="nm">products/?page=24</span><span class="st">200</span><span class="ty">xhr</span><span class="in">index-1O tbdJy.js:3</span><span class="sz">17.1 kB</span><span class="tm">61 ms</span></div><div class="row" style="top:240.5px;background:#282828"><svg class="ic" width="14" height="12" viewBox="0 0 14 12"><use href="#brc"/></svg><span class="nm">products/?page=25</span><span class="st">200</span><span class="ty">xhr</span><span class="in">index-1O tbdJy.js:3</span><span class="sz">18.9 kB</span><span class="tm">54 ms</span></div><div class="row" style="top:261.5px;background:#1f1f1f"><svg class="ic" width="14" height="12" viewBox="0 0 14 12"><use href="#brc"/></svg><span class="nm">products/?page=26</span><span class="st">200</span><span class="ty">xhr</span><span class="in">index-1O tbdJy.js:3</span><span class="sz">23.6 kB</span><span class="tm">64 ms</span></div><div class="row" style="top:282.5px;background:#282828"><svg class="ic" width="14" height="12" viewBox="0 0 14 12"><use href="#brc"/></svg><span class="nm">products/?page=27</span><span class="st">200</span><span class="ty">xhr</span><span class="in">index-1O tbdJy.js:3</span><span class="sz">23.1 kB</span><span class="tm">62 ms</span></div><div class="row" style="top:303.5px;background:#1f1f1f"><svg class="ic" width="14" height="12" viewBox="0 0 14 12"><use href="#brc"/></svg><span class="nm">products/?page=28</span><span class="st">200</span><span class="ty">xhr</span><span class="in">index-1O tbdJy.js:3</span><span class="sz">25.1 kB</span><span class="tm">53 ms</span></div><div class="row" style="top:324.5px;background:#282828"><svg class="ic" width="14" height="12" viewBox="0 0 14 12"><use href="#brc"/></svg><span class="nm">products/?page=29</span><span class="st">200</span><span class="ty">xhr</span><span class="in">index-1O tbdJy.js:3</span><span class="sz">19.7 kB</span><span class="tm">72 ms</span></div><div class="row" style="top:345.5px;background:#1f1f1f"><svg class="ic" width="14" height="12" viewBox="0 0 14 12"><use href="#brc"/></svg><span class="nm">products/?page=30</span><span class="st">200</span><span class="ty">xhr</span><span class="in">index-1O tbdJy.js:3</span><span class="sz">22.7 kB</span><span class="tm">53 ms</span></div><div class="row" style="top:366.5px;background:#282828"><svg class="ic" width="14" height="12" viewBox="0 0 14 12"><use href="#brc"/></svg><span class="nm">products/?page=31</span><span class="st">200</span><span class="ty">xhr</span><span class="in">index-1O tbdJy.js:3</span><span class="sz">12.2 kB</span><span class="tm">57 ms</span></div><div class="row" style="top:387.5px;background:#1f1f1f"><svg class="ic" width="14" height="12" viewBox="0 0 14 12"><use href="#brc"/></svg><span class="nm">products/?page=32</span><span class="st">200</span><span class="ty">xhr</span><span class="in">index-1O tbdJy.js:3</span><span class="sz">1.1 kB</span><span class="tm">25 ms</span></div><div class="row" style="top:408.5px;background:#282828"><svg class="ic" width="14" height="12" viewBox="0 0 14 12"><use href="#brc"/></svg><span class="nm">banklist/</span><span class="st">200</span><span class="ty">xhr</span><span class="in">index-1O tbdJy.js:3</span><span class="sz">2.5 kB</span><span class="tm">18 ms</span></div><div class="row" style="top:429.5px;background:#1f1f1f"><svg class="ic" width="14" height="12" viewBox="0 0 14 12"><use href="#brc"/></svg><span class="nm">moathons/?page=1&amp;page_size...</span><span class="st">200</span><span class="ty">xhr</span><span class="in">index-1O tbdJy.js:3</span><span class="sz">3.9 kB</span><span class="tm">68 ms</span></div><div class="row" style="top:450.5px;background:#282828"><svg class="ic" width="14" height="12" viewBox="0 0 14 12"><use href="#brc"/></svg><span class="nm">moathons/?page=1&amp;page_size...</span><span class="st">200</span><span class="ty">xhr</span><span class="in">index-1O tbdJy.js:3</span><span class="sz">3.9 kB</span><span class="tm">74 ms</span></div></div>
<div class="abs" style="left:207px;top:239px;width:1px;height:470px;background:#5b5b5b"></div>
<div class="abs" style="left:269px;top:239px;width:1px;height:470px;background:#5b5b5b"></div>
<div class="abs" style="left:331px;top:239px;width:1px;height:470px;background:#5b5b5b"></div>
<div class="abs" style="left:435px;top:239px;width:1px;height:470px;background:#5b5b5b"></div>
<div class="abs" style="left:497px;top:239px;width:1px;height:470px;background:#5b5b5b"></div>
<div class="abs" style="left:562px;top:487px;width:9px;height:204px;border-radius:4px;background:#9e9e9e"></div>
<svg class="abs" style="left:560px;top:695px" width="12" height="10"><path d="M1 2h10L6 8z" fill="#9e9e9e"/></svg>
<div class="abs" style="left:0;top:709px;width:573px;height:1px;background:#5b5b5b"></div>
<div class="abs" style="left:0;top:736.5px;width:573px;height:27px;background:#3c3c3c;border-top:1px solid #5b5b5b;border-bottom:1px solid #5b5b5b"></div>
<div class="dtt" style="left:11px;top:710px;line-height:27px;color:#c7c7c7">52 requests</div>
<div class="dtt" style="left:93.5px;top:710px;line-height:27px;color:#c7c7c7">5.7 MB transferred</div>
<div class="dtt" style="left:213.5px;top:710px;line-height:27px;color:#c7c7c7">6.5 MB resources</div>
<div class="dtt" style="left:325.5px;top:710px;line-height:27px;color:#c7c7c7">Finish: 18.91 s</div>
<div class="dtt" style="left:421px;top:710px;line-height:27px;color:#7cacf8">DOMContentLoaded: 346 ms</div>
<div class="abs" style="left:83.70000000000005px;top:715px;width:1px;height:16px;background:#5b5b5b"></div>
<div class="abs" style="left:203.5px;top:715px;width:1px;height:16px;background:#5b5b5b"></div>
<div class="abs" style="left:315.5px;top:715px;width:1px;height:16px;background:#5b5b5b"></div>
<div class="abs" style="left:411.5px;top:715px;width:1px;height:16px;background:#5b5b5b"></div>
<svg class="abs" style="left:0;top:737px" width="573" height="54" viewBox="0 0 573 54">
 <g fill="#c7c7c7"><circle cx="17" cy="8.5" r="1.4"/><circle cx="17" cy="13.5" r="1.4"/><circle cx="17" cy="18.5" r="1.4"/></g>
 <g fill="none" stroke="#c7c7c7" stroke-width="1.4"><rect x="521" y="6.5" width="13" height="13"/><path d="M529.5 6.5v13"/></g>
 <path d="M550.5 8.5l9.5 9.5M560 8.5l-9.5 9.5" stroke="#c7c7c7" stroke-width="1.5"/>
 <g fill="none" stroke="#c7c7c7" stroke-width="1.4"><rect x="10" y="33.5" width="14" height="13"/><path d="M14 33.5v13"/></g><path d="M17 36.5l3.5 3.5l-3.5 3.5z" fill="#c7c7c7"/>
 <circle cx="44.5" cy="40" r="6.8" fill="none" stroke="#c7c7c7" stroke-width="1.4"/><path d="M39.7 44.8L49.3 35.2" stroke="#c7c7c7" stroke-width="1.4"/>
 <rect x="63.5" y="32" width="1" height="16" fill="#5b5b5b"/>
 <path d="M100 37.5h6.5l-3.25 3.8z" fill="#c7c7c7"/>
 <rect x="118.5" y="32" width="1" height="16" fill="#5b5b5b"/>
 <path d="M127 40c3-4.5 6-6 9-6s6 1.5 9 6c-3 4.5-6 6-9 6s-6-1.5-9-6z" fill="none" stroke="#c7c7c7" stroke-width="1.4"/><circle cx="136" cy="40" r="2.6" fill="none" stroke="#c7c7c7" stroke-width="1.4"/>
 <rect x="155.5" y="32" width="1" height="16" fill="#5b5b5b"/>
</svg>
<div class="dtt" style="left:39px;top:738.5px;line-height:27px;color:#7cacf8">Console</div>
<div class="dtt" style="left:102.70000000000005px;top:738.5px;line-height:27px;color:#c7c7c7">AI assistance</div>
<div class="dtt" style="left:203px;top:738.5px;line-height:27px;color:#c7c7c7">Issues</div>
<div class="abs" style="left:28.799999999999955px;top:761px;width:64px;height:3px;border-radius:2px 2px 0 0;background:#7cacf8"></div>
<div class="abs" style="left:0;top:790px;width:573px;height:1px;background:#5b5b5b"></div>
<div class="dtt" style="left:76px;top:765px;line-height:26px;color:#e3e3e3">top</div>
<div class="abs" style="left:163.5px;top:767px;width:180px;height:20px;border-radius:10px;background:#3c3c3c"></div>
<svg class="abs" style="left:166px;top:769px" width="16" height="16" viewBox="0 0 16 16"><path d="M3 3.5h10L9.3 8v5H6.7V8z" fill="none" stroke="#c7c7c7" stroke-width="1.3" stroke-linejoin="round"/></svg>
<div class="dtt" style="left:191.70000000000005px;top:765px;line-height:26px;color:#aaaaaa">Filter</div>
<div class="dtt" style="left:355px;top:765px;line-height:26px;color:#e3e3e3">Default levels</div>
<div class="dtt" style="left:458px;top:765px;line-height:26px;color:#e3e3e3">2 Issues:</div>
<div class="dtt" style="left:521px;top:765px;line-height:26px;color:#7cacf8">2</div>
<svg class="abs" style="left:0;top:764px" width="573" height="26" viewBox="0 0 573 26">
 <path d="M434 11.5h6l-3 3.5z" fill="#c7c7c7"/>
 <rect x="449" y="5" width="1" height="16" fill="#5b5b5b"/>
 <path d="M510 8.5h9.5v7h-7L510 18z" fill="#7cacf8"/><path d="M512 11h5.5M512 13.2h3.5" stroke="#282828" stroke-width=".9"/>
 <rect x="538" y="5" width="1" height="16" fill="#5b5b5b"/>
 <g transform="translate(555 13)"><path d="M-1.3-7.5h2.6l.5 2.1l1.6.9l2.1-.7l1.3 2.2l-1.6 1.5v1.9l1.6 1.5l-1.3 2.2l-2.1-.7l-1.6.9l-.5 2.1h-2.6l-.5-2.1l-1.6-.9l-2.1.7l-1.3-2.2l1.6-1.5v-1.9l-1.6-1.5l1.3-2.2l2.1.7l1.6-.9z" fill="none" stroke="#c7c7c7" stroke-width="1.4" stroke-linejoin="round"/><circle r="2.2" fill="#c7c7c7"/></g>
</svg>
<div class="abs" style="left:5px;top:795.5px;width:564px;height:18px;border-radius:4px;background:#4e2b2b"></div>
<svg class="abs" style="left:12px;top:798.5px" width="13" height="13" viewBox="0 0 13 13"><circle cx="6.5" cy="6.5" r="6" fill="#e46962"/><path d="M4.3 4.3l4.4 4.4M8.7 4.3l-4.4 4.4" stroke="#4e2b2b" stroke-width="1.3"/></svg>
<div class="mono" style="left:29px;top:795.5px;line-height:18px;color:#f9dedc;font-size:11px;transform:scaleX(.909);transform-origin:0 50%">GET <u style="color:#d3e3fd">https://d314hr75zv7jjv.cloudfront.net/products</u> 404 (Not Found)</div>
<div class="mono" style="left:461px;top:795.5px;line-height:18px;color:#d3e3fd;font-size:11px;transform:scaleX(.909);transform-origin:0 50%"><u>products:1</u></div>
<svg class="abs" style="left:527px;top:798px" width="14" height="14" viewBox="0 0 14 14"><circle cx="7" cy="7" r="6" fill="none" stroke="#7cacf8" stroke-width="1.3"/><path d="M7 3.5v5M5 6.5l2 2l2-2" fill="none" stroke="#7cacf8" stroke-width="1.2"/></svg>
<svg class="abs" style="left:14px;top:823px" width="10" height="14"><path d="M3 3l4 4l-4 4" fill="none" stroke="#7cacf8" stroke-width="1.5"/></svg>
<div class="abs" style="left:33px;top:822.5px;width:33px;height:15px;border:1px solid #6f6f6f;border-radius:3px"></div>
<div class="abs" style="left:69px;top:822.5px;width:15.5px;height:15px;border:1px solid #6f6f6f;border-radius:3px"></div>
<div class="mono" style="left:39px;top:821px;line-height:18px;color:#9e9e9e;font-style:italic;font-size:10px">ctrl</div>
<div class="mono" style="left:74px;top:821px;line-height:18px;color:#9e9e9e;font-style:italic;font-size:10px">i</div>
<div class="mono" style="left:92px;top:821px;line-height:18px;color:#9e9e9e;font-style:italic;font-size:10px">to turn on code suggestions. <u>Don't show again</u></div></div>
<div id="popup">
  <div class="abs" style="left:20px;top:24px;font-size:16px;line-height:20px;color:#e3e3e3;letter-spacing:0.15px">d314hr75zv7jjv.cloudfront.net</div>
  <svg class="abs" style="left:282px;top:27px" width="16" height="16" viewBox="0 0 16 16"><path d="M3 3L13 13M13 3L3 13" stroke="#c7c7c7" stroke-width="1.5"/></svg>
  <svg class="abs" style="left:19px;top:64px" width="22" height="22" viewBox="0 0 22 22"><g fill="none" stroke="#c7c7c7" stroke-width="1.5"><rect x="5.2" y="10" width="11.6" height="9.4" rx="1"/><path d="M7.5 10V7a3.5 3.5 0 0 1 7 0v3"/></g><circle cx="11" cy="14.7" r="1.3" fill="#c7c7c7"/></svg>
  <div class="pi" style="top:66px">이 연결은 안전합니다.</div>
  <svg class="abs" style="left:282px;top:68px" width="16" height="16" viewBox="0 0 16 16"><path d="M6 3.5L10.5 8L6 12.5" fill="none" stroke="#c7c7c7" stroke-width="1.5"/></svg>
  <svg class="abs" style="left:19px;top:104px" width="22" height="22" viewBox="0 0 22 22"><path d="M11 3.5a7.5 7.5 0 1 0 7.5 7.5a3 3 0 0 1-3-3a3 3 0 0 1-3-3a1.5 1.5 0 0 1-1.5-1.5z" fill="none" stroke="#c7c7c7" stroke-width="1.5" stroke-linejoin="round"/><g fill="#c7c7c7"><circle cx="8.3" cy="9" r="1.2"/><circle cx="7.8" cy="13.5" r="1.2"/><circle cx="12" cy="15.3" r="1.2"/><circle cx="12.3" cy="11.5" r=".9"/></g></svg>
  <div class="pi" style="top:106px">쿠키 및 사이트 데이터</div>
  <svg class="abs" style="left:282px;top:108px" width="16" height="16" viewBox="0 0 16 16"><path d="M6 3.5L10.5 8L6 12.5" fill="none" stroke="#c7c7c7" stroke-width="1.5"/></svg>
  <svg class="abs" style="left:19px;top:144px" width="22" height="22" viewBox="0 0 22 22"><path d="M11 3.2L13 5.3L15.8 4.9L16.3 7.7L18.8 9.1L17.5 11.6L18.8 14.1L16.3 15.4L15.8 18.2L13 17.8L11 19.8L9 17.8L6.2 18.2L5.7 15.4L3.2 14.1L4.5 11.6L3.2 9.1L5.7 7.7L6.2 4.9L9 5.3Z" fill="none" stroke="#c7c7c7" stroke-width="1.4" stroke-linejoin="round"/><circle cx="11" cy="11.5" r="3" fill="none" stroke="#c7c7c7" stroke-width="1.4"/></svg>
  <div class="pi" style="top:146px">사이트 설정</div>
  <svg class="abs" style="left:281px;top:147px" width="18" height="18" viewBox="0 0 18 18"><g fill="none" stroke="#c7c7c7" stroke-width="1.5"><path d="M8 2.8H2.8V15.2H15.2V10"/><path d="M10.5 2.8H15.2V7.5M15.2 2.8L8 10"/></g></svg>
  <div class="abs" style="left:20px;top:184px;width:280px;height:1px;background:#474747"></div>
  <svg class="abs" style="left:19px;top:201px" width="22" height="22" viewBox="0 0 22 22"><path d="M15.8 4.5A7.6 7.6 0 1 0 18.4 9.5" fill="none" stroke="#c7c7c7" stroke-width="1.5"/><path d="M11 10V15.5" stroke="#c7c7c7" stroke-width="1.6"/><circle cx="11" cy="7.2" r="1.1" fill="#c7c7c7"/><path d="M17.5 2.5L18.2 4.3L20 5L18.2 5.7L17.5 7.5L16.8 5.7L15 5L16.8 4.3Z" fill="#c7c7c7"/></svg>
  <div class="pi" style="top:203px">이 페이지에 관한 정보</div>
  <div class="abs" style="left:48px;top:224px;font-size:12.5px;line-height:16px;color:#c7c7c7;white-space:nowrap;transform:scaleX(.94);transform-origin:0 50%">출처와 주제에 관해 자세히 알아보기</div>
  <svg class="abs" style="left:281px;top:204px" width="18" height="18" viewBox="0 0 18 18"><g fill="none" stroke="#c7c7c7" stroke-width="1.5"><path d="M8 2.8H2.8V15.2H15.2V10"/><path d="M10.5 2.8H15.2V7.5M15.2 2.8L8 10"/></g></svg>
</div>
</body></html>
